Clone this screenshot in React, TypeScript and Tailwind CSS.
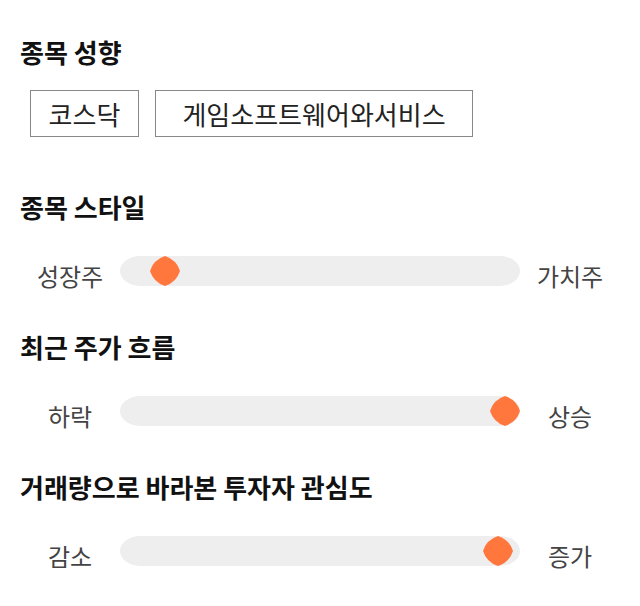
import React from 'react';

type SliderRowProps = {
  left: string;
  right: string;
  value: number; // 0..100
};

const FONT = { fontFamily: '"Noto Sans CJK KR", "Noto Sans", sans-serif' };

function Thumb() {
  return (
    <svg width="30" height="30" viewBox="0 0 30 30">
      <path
        d="M15 0 A23 23 0 0 1 30 15 A23 23 0 0 1 15 30 A23 23 0 0 1 0 15 A23 23 0 0 1 15 0 Z"
        fill="#ff773d"
      />
    </svg>
  );
}

function SliderRow({ left, right, value }: SliderRowProps) {
  // thumb center moves from 15px to (width - 15px)
  const pos = `calc(${value / 100} * (100% - 30px))`;
  return (
    <div className="flex items-center h-[30px] mt-[34px]">
      <span className="w-[100px] text-center text-[24px] leading-[30px] translate-y-[5px] text-[#444]">
        {left}
      </span>
      <div className="relative flex-1 h-[30px] bg-[#eeeeee] rounded-[20px/15px]">
        <div className="absolute top-0" style={{ left: pos }}>
          <Thumb />
        </div>
      </div>
      <span className="w-[100px] text-center text-[24px] leading-[30px] translate-y-[5px] text-[#444]">
        {right}
      </span>
    </div>
  );
}

function Heading({ children }: { children: React.ReactNode }) {
  return (
    <h2 className="text-[26px] leading-[30px] font-bold text-[#111]">
      {children}
    </h2>
  );
}

export default function App() {
  return (
    <div className="w-[640px] h-[606px] bg-white px-5 pt-[37px]" style={FONT}>
      <section>
        <Heading>종목 성향</Heading>
        <div className="flex gap-4 pl-[10px] mt-[23px]">
          <div className="w-[109px] h-[47px] border border-[#888] flex items-center justify-center text-[26px] text-[#222]">
            코스닥
          </div>
          <div className="w-[318px] h-[47px] border border-[#888] flex items-center justify-center text-[26px] text-[#222]">
            게임소프트웨어와서비스
          </div>
        </div>
      </section>

      <section className="mt-[55px]">
        <Heading>종목 스타일</Heading>
        <SliderRow left="성장주" right="가치주" value={8} />
      </section>

      <section className="mt-[46px]">
        <Heading>최근 주가 흐름</Heading>
        <SliderRow left="하락" right="상승" value={100} />
      </section>

      <section className="mt-[46px]">
        <Heading>거래량으로 바라본 투자자 관심도</Heading>
        <SliderRow left="감소" right="증가" value={98} />
      </section>
    </div>
  );
}
